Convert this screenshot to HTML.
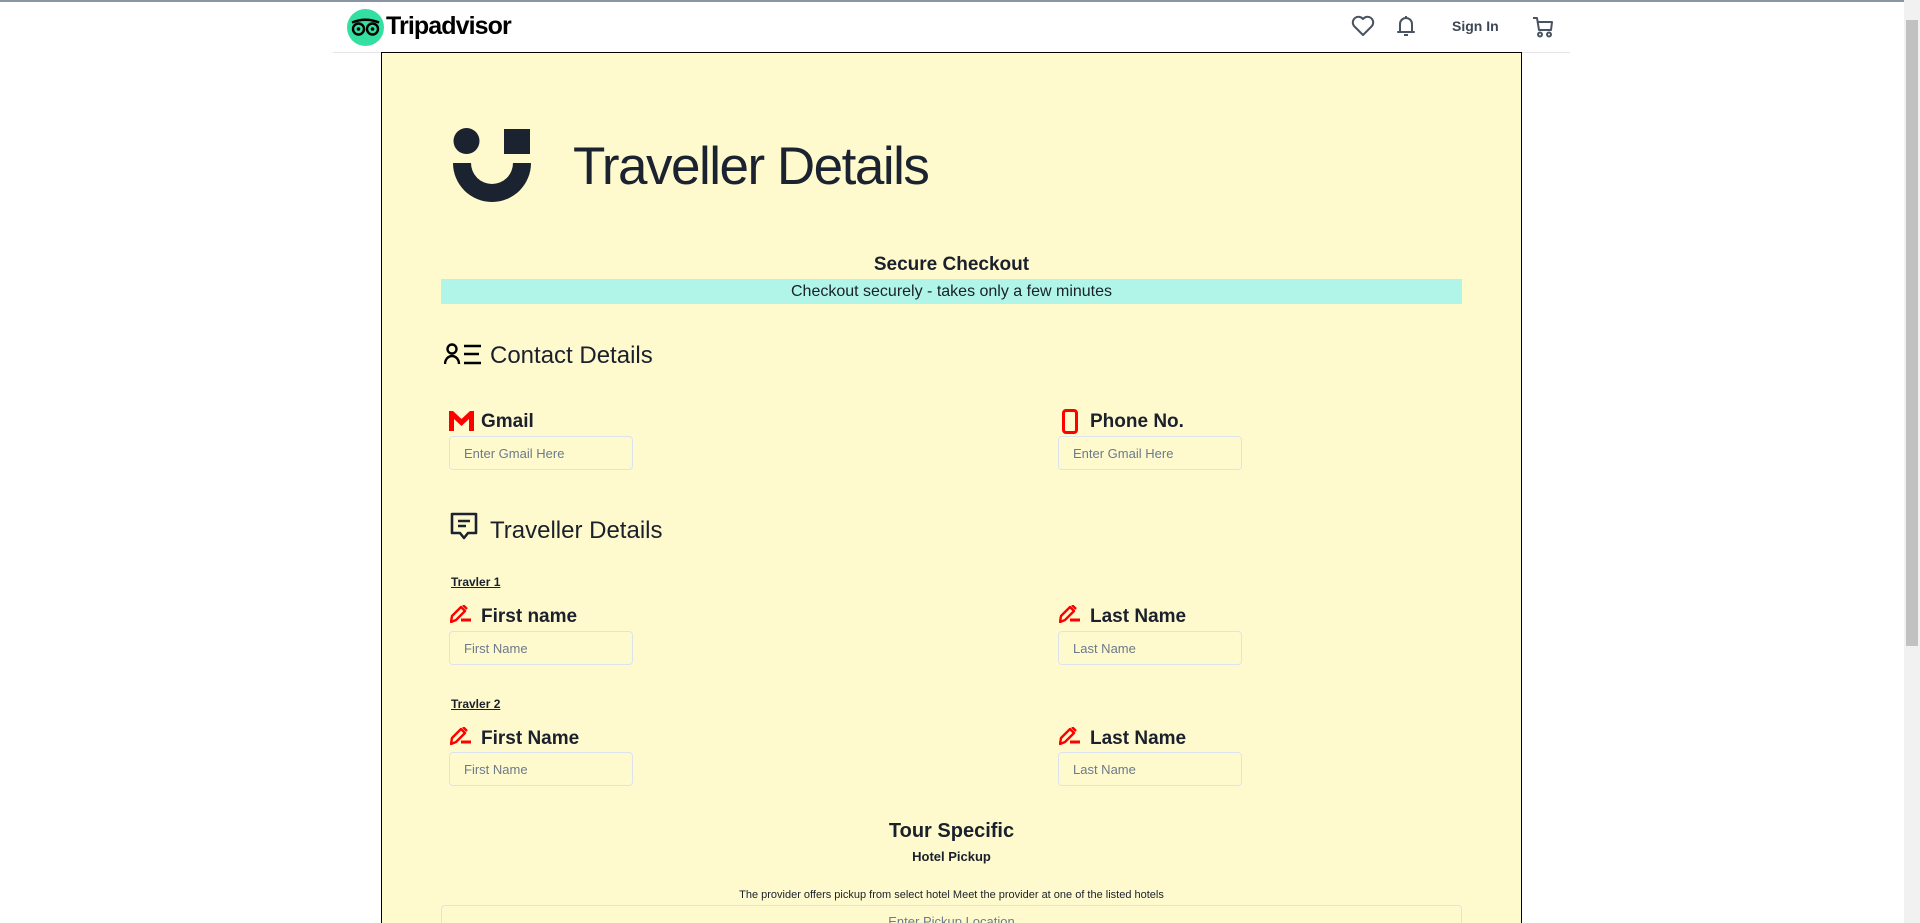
<!DOCTYPE html>
<html><head><meta charset="utf-8"><style>
*{margin:0;padding:0;box-sizing:border-box}
html,body{width:1920px;height:923px;overflow:hidden;background:#fff;font-family:"Liberation Sans","DejaVu Sans",sans-serif;color:#1a202c}
#wrap{position:relative;width:1920px;height:923px;overflow:hidden}
.a{position:absolute}
.topline{left:0;top:0;width:1920px;height:2px;background:#8a96a3}
.hdrline{left:333px;top:52px;width:1237px;height:1px;background:#e5e5e5}
.box{left:381px;top:52px;width:1141px;height:900px;background:#fffacd;border:1px solid #000}
.sb{left:1904px;top:0;width:16px;height:923px;background:#f1f1f1}
.thumb{left:1906px;top:20px;width:12px;height:626px;background:#c1c1c1}
.lbl{font-size:19px;font-weight:bold;color:#1a202c;white-space:nowrap}
.inp{border:1px solid #dde3ee;border-radius:4px;width:184px;height:34px;font-size:13px;color:#6b7a8c;padding:9px 14px;white-space:nowrap}
.h2{font-size:24px;white-space:nowrap}
.tr{font-size:12px;text-decoration:underline;font-weight:bold;color:#1a202c}
</style></head><body><div id="wrap">
<div class="a topline"></div>
<svg class="a" style="left:347px;top:9px" width="37" height="37" viewBox="0 0 37 37"><circle cx="18.5" cy="18.5" r="18.5" fill="#34e0a1"/><circle cx="11.5" cy="20" r="5.5" fill="none" stroke="#000" stroke-width="2.4"/><circle cx="25.5" cy="20" r="5.5" fill="none" stroke="#000" stroke-width="2.4"/><circle cx="11.5" cy="20" r="1.8"/><circle cx="25.5" cy="20" r="1.8"/><path d="M5 13.5 Q18.5 8 32 13.5" fill="none" stroke="#000" stroke-width="2.4"/></svg>
<div class="a" style="left:386px;top:12px;font-size:25px;font-weight:bold;color:#000;letter-spacing:-0.9px">Tripadvisor</div>
<svg class="a" style="left:1351px;top:15px" width="24" height="22" viewBox="0 0 24 22"><path d="M12 20 L3 11 A5 5 0 0 1 12 4 A5 5 0 0 1 21 11 Z" fill="none" stroke="#4a5360" stroke-width="2" stroke-linejoin="round"/></svg>
<svg class="a" style="left:1395px;top:13px" width="22" height="26" viewBox="0 0 22 26"><path d="M5 19 V11 A6 6 0 0 1 17 11 V19 H19 H3 Z M11 3 V5 M9 22 H13" fill="none" stroke="#4a5360" stroke-width="2" stroke-linejoin="round"/></svg>
<div class="a" style="left:1452px;top:18px;font-size:14px;font-weight:bold;color:#3c4654">Sign In</div>
<svg class="a" style="left:1531px;top:15px" width="24" height="24" viewBox="0 0 24 24"><path d="M2 3 H6 L8 15 H20 L21 7 H7" fill="none" stroke="#4a5360" stroke-width="2" stroke-linejoin="round"/><circle cx="9" cy="19.5" r="2" fill="none" stroke="#4a5360" stroke-width="2"/><circle cx="18" cy="19.5" r="2" fill="none" stroke="#4a5360" stroke-width="2"/></svg>
<div class="a hdrline"></div>
<div class="a box"></div>
<svg class="a" style="left:453px;top:128px" width="78" height="76" viewBox="0 0 78 76"><circle cx="13.5" cy="13" r="13" fill="#1b2230"/><rect x="51" y="1" width="26" height="25" fill="#1b2230"/><path d="M0 35 H18 A21 21 0 0 0 60 35 H78 A39 39 0 0 1 0 35 Z" fill="#1b2230"/></svg>
<div class="a" style="left:573px;top:136px;font-size:53px;color:#1b2230;letter-spacing:-1.5px;white-space:nowrap">Traveller Details</div>
<div class="a" style="left:381px;width:1141px;top:254px;text-align:center;font-size:19px;font-weight:bold">Secure Checkout</div>
<div class="a" style="left:441px;top:279px;width:1021px;height:25px;background:#b0f5e8;text-align:center;font-size:16px;line-height:26px">Checkout securely - takes only a few minutes</div>
<svg class="a" style="left:444px;top:342px" width="40" height="24" viewBox="0 0 40 24"><circle cx="8" cy="7" r="4.5" fill="none" stroke="#000" stroke-width="2.4"/><path d="M1 22 A7 8 0 0 1 15 22" fill="none" stroke="#000" stroke-width="2.4"/><path d="M20 4 H37 M20 12 H35 M20 21 H37" stroke="#000" stroke-width="2.6"/></svg>
<div class="a h2" style="left:490px;top:342px">Contact Details</div>
<svg class="a" style="left:449px;top:411px" width="25" height="20" viewBox="0 0 25 20"><path d="M0 0 H4 L12.5 8 L21 0 H25 V20 H20 V8 L12.5 15 L5 8 V20 H0 Z" fill="#f00"/></svg>
<div class="a lbl" style="left:481px;top:411px">Gmail</div>
<div class="a inp" style="left:449px;top:436px">Enter Gmail Here</div>
<svg class="a" style="left:1062px;top:409px" width="16" height="25" viewBox="0 0 16 25"><rect x="1.5" y="1.5" width="13" height="22" rx="2.5" fill="none" stroke="#f00" stroke-width="3"/></svg>
<div class="a lbl" style="left:1090px;top:411px">Phone No.</div>
<div class="a inp" style="left:1058px;top:436px">Enter Gmail Here</div>
<svg class="a" style="left:449px;top:511px" width="30" height="32" viewBox="0 0 30 32"><path d="M3 3 H27 V22 H19 L15 27 L11 22 H3 Z" fill="none" stroke="#1b2230" stroke-width="2.6" stroke-linejoin="round"/><path d="M9 10 H21 M9 15 H17" stroke="#1b2230" stroke-width="2.6"/></svg>
<div class="a h2" style="left:490px;top:517px">Traveller Details</div>
<div class="a tr" style="left:451px;top:575px">Travler 1</div>
<svg class="a" style="left:450px;top:605px" width="22" height="18" viewBox="0 0 22 18"><path d="M1 17 L2 11 L11 2 L15 6 L6 15 Z M13 0 L17 4" fill="none" stroke="#f00" stroke-width="2.4" stroke-linejoin="round"/><path d="M11 15 H21" stroke="#f00" stroke-width="3"/></svg>
<div class="a lbl" style="left:481px;top:606px">First name</div>
<div class="a inp" style="left:449px;top:631px">First Name</div>
<svg class="a" style="left:1059px;top:605px" width="22" height="18" viewBox="0 0 22 18"><path d="M1 17 L2 11 L11 2 L15 6 L6 15 Z M13 0 L17 4" fill="none" stroke="#f00" stroke-width="2.4" stroke-linejoin="round"/><path d="M11 15 H21" stroke="#f00" stroke-width="3"/></svg>
<div class="a lbl" style="left:1090px;top:606px">Last Name</div>
<div class="a inp" style="left:1058px;top:631px">Last Name</div>
<div class="a tr" style="left:451px;top:697px">Travler 2</div>
<svg class="a" style="left:450px;top:727px" width="22" height="18" viewBox="0 0 22 18"><path d="M1 17 L2 11 L11 2 L15 6 L6 15 Z M13 0 L17 4" fill="none" stroke="#f00" stroke-width="2.4" stroke-linejoin="round"/><path d="M11 15 H21" stroke="#f00" stroke-width="3"/></svg>
<div class="a lbl" style="left:481px;top:728px">First Name</div>
<div class="a inp" style="left:449px;top:752px">First Name</div>
<svg class="a" style="left:1059px;top:727px" width="22" height="18" viewBox="0 0 22 18"><path d="M1 17 L2 11 L11 2 L15 6 L6 15 Z M13 0 L17 4" fill="none" stroke="#f00" stroke-width="2.4" stroke-linejoin="round"/><path d="M11 15 H21" stroke="#f00" stroke-width="3"/></svg>
<div class="a lbl" style="left:1090px;top:728px">Last Name</div>
<div class="a inp" style="left:1058px;top:752px">Last Name</div>
<div class="a" style="left:381px;width:1141px;top:820px;text-align:center;font-size:20px;font-weight:bold">Tour Specific</div>
<div class="a" style="left:381px;width:1141px;top:849px;text-align:center;font-size:13px;font-weight:bold">Hotel Pickup</div>
<div class="a" style="left:381px;width:1141px;top:889px;text-align:center;font-size:11px">The provider offers pickup from select hotel Meet the provider at one of the listed hotels</div>
<div class="a" style="left:441px;top:905px;width:1021px;height:40px;border:1px solid #dde3ee;border-radius:4px;text-align:center;font-size:13px;color:#6b7a8c;padding-top:8px">Enter Pickup Location</div>
<div class="a sb"></div>
<div class="a thumb"></div>
</div></body></html>
